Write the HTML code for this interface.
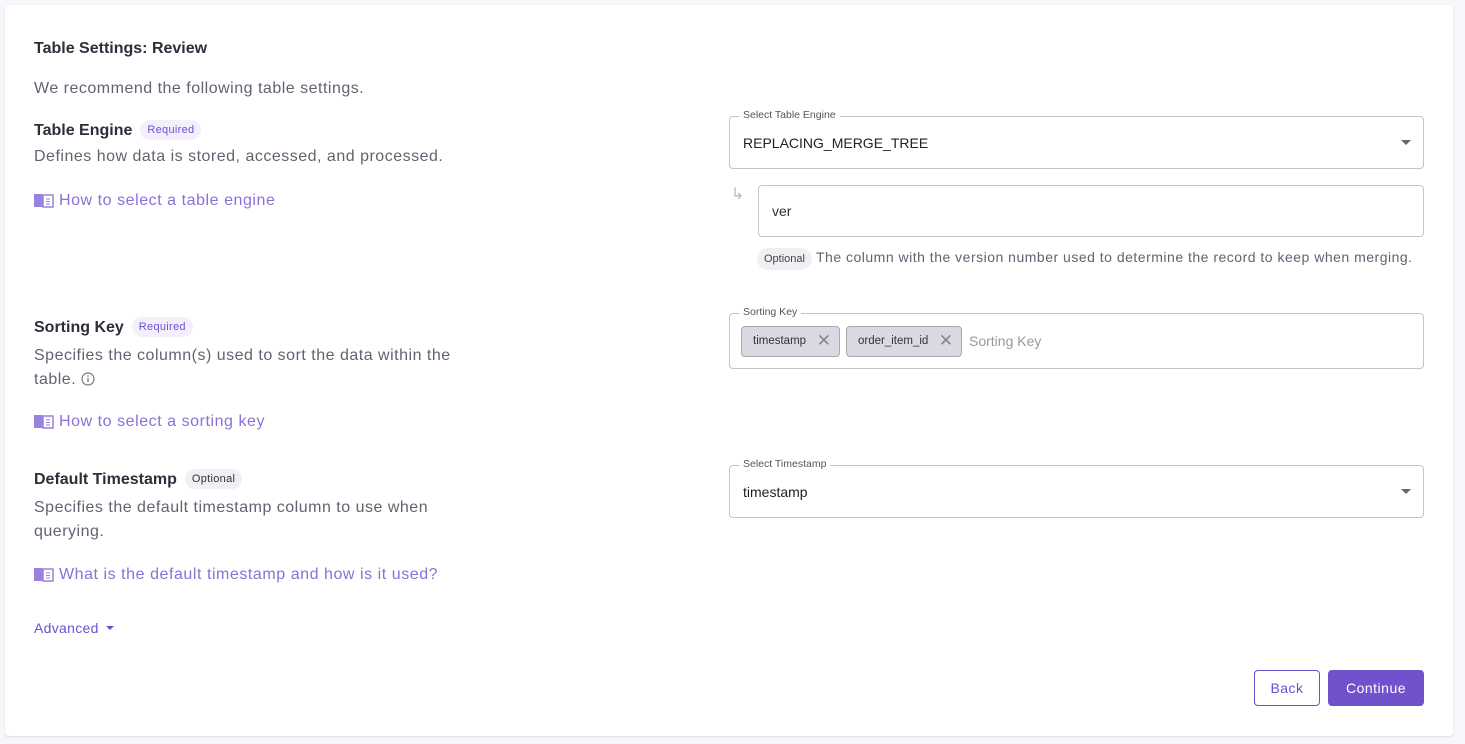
<!DOCTYPE html>
<html><head><meta charset="utf-8"><style>
*{box-sizing:border-box;margin:0;padding:0}
body{width:1465px;height:744px;background:#f6f7fb;font-family:"Liberation Sans",sans-serif;position:relative;overflow:hidden}
.card{position:absolute;left:5px;top:5px;width:1448px;height:731px;background:#fff;border-radius:4px;box-shadow:0 1px 2px rgba(0,0,0,.12)}
.a{position:absolute;white-space:nowrap}
.h{font-size:16px;font-weight:bold;color:#2b2f3a}
.p{font-size:16px;color:#5f6470;letter-spacing:.5px}
.link{font-size:16px;color:#8c6fd9;letter-spacing:.55px}
.badge{display:inline-block;font-size:11px;padding:4px 7px;border-radius:11px;font-weight:normal;vertical-align:2px;margin-left:8px;letter-spacing:.3px}
.req{background:#f3effc;color:#6d4fd0}
.opt{background:#eef0f4;color:#333}
.box{position:absolute;border:1px solid #c4c4c4;border-radius:4px}
.lab{position:absolute;top:-8px;left:9px;background:#fff;padding:0 4px;font-size:10.5px;color:#555}
.val{position:absolute;font-size:14px;color:#222}
.caret{position:absolute;right:12px;top:23px;width:0;height:0;border-left:5px solid transparent;border-right:5px solid transparent;border-top:5px solid #666}
.chip{position:absolute;top:12px;height:31px;background:#d8d9e2;border:1px solid #aaa;border-radius:4px;font-size:11.5px;color:#333;padding:8px 0 0 11px}
.chip span{position:absolute;right:8px;top:4px;font-size:17px;color:#888}
.btn{position:absolute;top:670px;height:36px;border-radius:4px;font-size:14px;text-align:center;line-height:34px;letter-spacing:.5px}
</style></head><body>
<div class="card"></div>
<svg width="0" height="0" style="position:absolute"><defs><symbol id="bk" viewBox="0 0 20 16"><path d="M0 2h8l2 2v11H0z" fill="#9a82de"/><rect x="9" y="3" width="10" height="12" fill="#fff" stroke="#9a82de" stroke-width="1.5"/><path d="M12 7h4M12 9.5h4M12 12h4" stroke="#9a82de" stroke-width="1"/></symbol></defs></svg>

<div class="a h" style="left:34px;top:40px">Table Settings: Review</div>
<div class="a p" style="left:34px;top:80px">We recommend the following table settings.</div>

<div class="a h" style="left:34px;top:120px">Table Engine<span class="badge req">Required</span></div>
<div class="a p" style="left:34px;top:148px">Defines how data is stored, accessed, and processed.</div>
<div class="a link" style="left:34px;top:192px"><svg width="20" height="16" style="vertical-align:-3px"><use href="#bk"/></svg> How to select a table engine</div>

<div class="a h" style="left:34px;top:317px">Sorting Key<span class="badge req">Required</span></div>
<div class="a p" style="left:34px;top:344px;line-height:24px">Specifies the column(s) used to sort the data within the<br>table. <svg width="14" height="14" style="vertical-align:-2px"><circle cx="7" cy="7" r="6" fill="none" stroke="#777" stroke-width="1.2"/><path d="M7 6v4" stroke="#777" stroke-width="1.3"/><circle cx="7" cy="4" r=".8" fill="#777"/></svg></div>
<div class="a link" style="left:34px;top:413px"><svg width="20" height="16" style="vertical-align:-3px"><use href="#bk"/></svg> How to select a sorting key</div>

<div class="a h" style="left:34px;top:469px">Default Timestamp<span class="badge opt">Optional</span></div>
<div class="a p" style="left:34px;top:496px;line-height:24px">Specifies the default timestamp column to use when<br>querying.</div>
<div class="a link" style="left:34px;top:566px"><svg width="20" height="16" style="vertical-align:-3px"><use href="#bk"/></svg> What is the default timestamp and how is it used?</div>

<div class="a" style="left:34px;top:620px;font-size:14px;color:#6d4fd0;letter-spacing:.3px">Advanced <span style="display:inline-block;border-left:4px solid transparent;border-right:4px solid transparent;border-top:4px solid #6d4fd0;vertical-align:3px;margin-left:3px"></span></div>

<div class="box" style="left:729px;top:116px;width:695px;height:53px"><div class="lab">Select Table Engine</div><div class="val" style="left:13px;top:18px">REPLACING_MERGE_TREE</div><div class="caret"></div></div>
<div class="a" style="left:731px;top:184px;font-size:16px;color:#bbb">↳</div>
<div class="box" style="left:758px;top:185px;width:666px;height:52px"><div class="val" style="left:13px;top:17px;color:#333">ver</div></div>
<div class="a" style="left:757px;top:248px;font-size:14px;color:#5f6470;letter-spacing:.5px"><span class="badge opt" style="margin-left:0;margin-right:4px;vertical-align:0;padding:5px 7px;color:#444;letter-spacing:0">Optional</span>The column with the version number used to determine the record to keep when merging.</div>

<div class="box" style="left:729px;top:313px;width:695px;height:56px"><div class="lab">Sorting Key</div>
<div class="chip" style="left:11px;width:99px">timestamp<span>✕</span></div>
<div class="chip" style="left:116px;width:116px">order_item_id<span>✕</span></div>
<div class="val" style="left:239px;top:19px;color:#999">Sorting Key</div></div>

<div class="box" style="left:729px;top:465px;width:695px;height:53px"><div class="lab">Select Timestamp</div><div class="val" style="left:13px;top:18px">timestamp</div><div class="caret"></div></div>

<div class="btn" style="left:1254px;width:66px;border:1px solid #6d4fd0;color:#6d4fd0;background:#fff">Back</div>
<div class="btn" style="left:1328px;width:96px;background:#7152cc;color:#fff;line-height:36px">Continue</div>
</body></html>
